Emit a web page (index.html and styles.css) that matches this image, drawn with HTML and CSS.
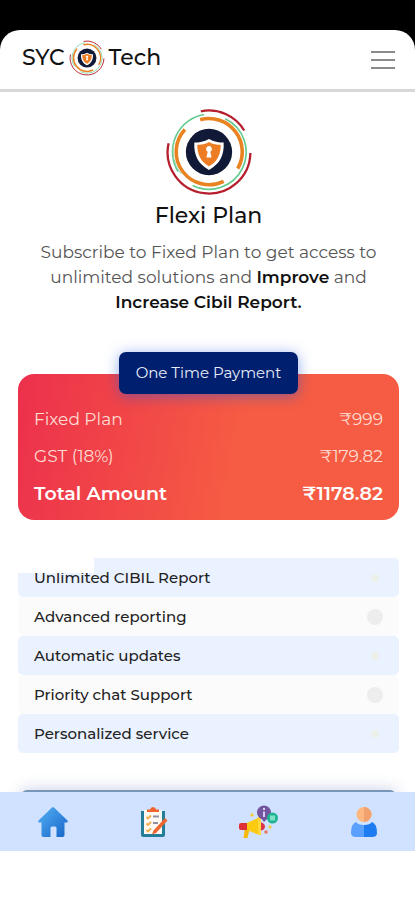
FILE: index.html
```html
<!DOCTYPE html>
<html lang="en">
<head>
    <meta charset="UTF-8">
    <meta name="viewport" content="width=device-width, initial-scale=1.0">
    <title>SYC Tech - Flexi Plan</title>
    <link rel="stylesheet" href="styles.css">
</head>
<body>
    <svg class="sprite" aria-hidden="true">
        <symbol id="logo" viewBox="-135 -135 270 270">
            <g fill="none">
                <path d="M-25-125A127 127 0 0 1 108-66" stroke="#b51f2d" stroke-width="7"/>
                <path d="M127 3A127 127 0 1 1-124-27" stroke="#b51f2d" stroke-width="7"/>
                <path d="M-15-115A116 116 0 0 0-95 60M50-102A114 114 0 0 1-50 103" stroke="#62c98f" stroke-width="5"/>
                <path d="M-106-35A110 110 0 0 0-85 68" stroke="#8fd6ac" stroke-width="3"/>
                <path d="M-27-99A102 102 0 0 1 88 51M-74-69A101 101 0 0 0 45 90" stroke="#e98220" stroke-width="11"/>
            </g>
            <circle r="71" fill="#101a36"/>
            <path d="M0-40C15-32 30-29 45-29C47 9 34 37 0 55C-34 37-47 9-45-29C-30-29-15-32 0-40Z" fill="#fff"/>
            <path d="M0-31C12-24 24-22 36-22C36 8 25 31 0 44C-25 31-36 8-36-22C-24-22-12-24 0-31Z" fill="#ed7d22"/>
            <path d="M-4-1A9 9 0 1 1 4-1L8 17H-8Z" fill="#fff"/>
        </symbol>
    </svg>

    <div class="app">
        <div class="status-bar"></div>
        <header class="header">
            <a href="#" class="brand">
                <span>SYC</span>
                <svg class="brand-logo"><use href="#logo"/></svg>
                <span>Tech</span>
            </a>
            <button class="menu-button" aria-label="Menu">
                <span></span>
                <span></span>
                <span></span>
            </button>
        </header>

        <main class="content">
            <section class="intro">
                <svg class="intro-logo"><use href="#logo"/></svg>
                <h1>Flexi Plan</h1>
                <p>Subscribe to Fixed Plan to get access to unlimited solutions and <strong>Improve</strong> and <strong>Increase Cibil Report.</strong></p>
            </section>

            <section class="price-card">
                <h2 class="price-badge">One Time Payment</h2>
                <dl class="price-list">
                    <div class="price-row">
                        <dt>Fixed Plan</dt>
                        <dd>₹999</dd>
                    </div>
                    <div class="price-row">
                        <dt>GST (18%)</dt>
                        <dd>₹179.82</dd>
                    </div>
                    <div class="price-row total">
                        <dt>Total Amount</dt>
                        <dd>₹1178.82</dd>
                    </div>
                </dl>
            </section>

            <ul class="features">
                <li>Unlimited CIBIL Report</li>
                <li>Advanced reporting</li>
                <li>Automatic updates</li>
                <li>Priority chat Support</li>
                <li>Personalized service</li>
            </ul>

            <button class="pay-button" aria-label="Pay"></button>
        </main>

        <nav class="bottom-nav">
            <a href="#" aria-label="Home">
                <svg viewBox="0 0 32 32">
                    <defs>
                        <linearGradient id="house" x1="0" y1="0" x2="1" y2="1">
                            <stop offset="0" stop-color="#55b1f5"/>
                            <stop offset="1" stop-color="#1664c8"/>
                        </linearGradient>
                    </defs>
                    <path d="M15 1.500Q16 .6 17 1.500L30.500 14.500Q31.500 16.500 29 16.500H27.500V29Q27.500 31 25.500 31H19.500V22Q19.500 20.500 18 20.500H15Q13.500 20.500 13.500 22V31H6.500Q4.500 31 4.500 29V16.500H3Q.5 16.500 1.500 14.500Z" fill="url(#house)"/>
                </svg>
            </a>
            <a href="#" aria-label="Reports">
                <svg viewBox="0 0 32 32">
                    <path d="M3 5H6V28H24V5H27V29Q27 31 25 31H5Q3 31 3 29Z" fill="#257e99"/>
                    <path d="M6 4H24V28H6Z" fill="#fff8f3"/>
                    <path d="M9 6V3.500H12Q12.500 1 15 1T18 3.500H21V6Z" fill="#f0642f"/>
                    <g fill="none" stroke="#f1ad4b" stroke-width="1.800">
                        <path d="M8.500 11L10 12.500L13 9.500M8.500 17.500L10 19L13 16M8.500 24L10 25.500L13 22.500"/>
                    </g>
                    <path d="M15 10.500H21M15 17H20" stroke="#8b91a0" stroke-width="2"/>
                    <path d="M14 28.500L15.500 24.500L27 12L29.500 14.500L18 27Z" fill="#ef6530"/>
                </svg>
            </a>
            <a href="#" aria-label="Offers">
                <svg class="wide" viewBox="0 0 40 34">
                    <path d="M6 22H11L8.500 33H4.500Z" fill="#f4b90c"/>
                    <path d="M2 18H9V25H2Q0 25 0 23V20Q0 18 2 18Z" fill="#dd2f35"/>
                    <path d="M8 18L20 12.500V30L8 25Z" fill="#fdca12"/>
                    <path d="M21 17Q26 18 26 21.500T21 26Z" fill="#dc344b"/>
                    <path d="M19 12H22V30H19Z" fill="#ffd83d"/>
                    <path d="M22 13L29 13L25 17Z" fill="#71559f"/>
                    <circle cx="25" cy="7.500" r="7" fill="#71559f"/>
                    <path d="M25 3V5M25 6.500V12" stroke="#d9cdf0" stroke-width="2"/>
                    <circle cx="33.500" cy="13" r="5.500" fill="#1fb391"/>
                    <rect x="31" y="10.500" width="5" height="5" fill="#80e0c7"/>
                    <path d="M11 10L13 8L15 10L13 12ZM29 22L31 20L33 22L31 24Z" fill="#f3cc35"/>
                    <circle cx="27" cy="27" r="1.800" fill="#ee775f"/>
                </svg>
            </a>
            <a href="#" aria-label="Profile">
                <svg viewBox="0 0 32 32">
                    <circle cx="16" cy="8.500" r="7.500" fill="#ffb780"/>
                    <path d="M16 1A7.500 7.500 0 0 1 16 16Z" fill="#f2a26e"/>
                    <path d="M8 16Q3 18 3 27Q3 31 8 31H16V19Q10 19 8 16Z" fill="#5aa1ff"/>
                    <path d="M24 16Q29 18 29 27Q29 31 24 31H16V19Q22 19 24 16Z" fill="#1d7cf2"/>
                </svg>
            </a>
        </nav>
        <div class="system-bar"></div>
    </div>
</body>
</html>
```
FILE: styles.css
```css
* {
    box-sizing: border-box;
}

body {
    margin: 0;
    font-family: Montserrat, Inter, sans-serif;
    color: #111;
    background-color: #fff;
}

h1,
h2,
p,
dl,
dd,
ul {
    margin: 0;
    padding: 0;
}

button {
    border: none;
    padding: 0;
    cursor: pointer;
}

.sprite {
    position: absolute;
    width: 0;
    height: 0;
}

.app {
    display: flex;
    flex-direction: column;
    height: 100vh;
    background: linear-gradient(#000 52px, #fff 52px);
}

.status-bar {
    flex: none;
    height: 30px;
}

.header {
    flex: none;
    display: flex;
    justify-content: space-between;
    align-items: center;
    height: 62px;
    padding: 0 20px 4px 22px;
    background-color: #fff;
    border-bottom: 3px solid #d8d8d8;
    border-radius: 20px 20px 0 0;
}

.brand {
    display: flex;
    align-items: center;
    gap: 4px;
    color: #111;
    font-size: 22px;
    font-weight: 500;
    text-decoration: none;
}

.brand-logo {
    width: 36px;
    height: 36px;
}

.menu-button {
    display: flex;
    flex-direction: column;
    gap: 6px;
    padding-top: 4px;
    background: none;
}

.menu-button span {
    width: 24px;
    height: 2px;
    background-color: #8c8c8c;
}

.content {
    flex: 1;
    min-height: 0;
    padding: 0 16px 0 18px;
    overflow: hidden;
    background-color: #fff;
}

.intro {
    padding: 16px 16px 0;
    text-align: center;
}

.intro-logo {
    display: block;
    width: 88px;
    height: 88px;
    margin: 0 auto 4px;
}

.intro h1 {
    margin-bottom: 8px;
    font-size: 22px;
    font-weight: 500;
    line-height: 32px;
}

.intro p {
    color: #555;
    font-size: 17px;
    line-height: 25px;
}

.intro strong {
    color: #111;
    font-weight: 600;
}

.price-card {
    display: flex;
    flex-direction: column;
    align-items: center;
    margin-top: 59px;
    padding: 0 16px 8px;
    color: #fff;
    background: linear-gradient(100deg, #ec304c, #f65c43 58%);
    border-radius: 16px;
}

.price-badge {
    margin-top: -22px;
    padding: 0 17px;
    background-color: #00206f;
    border-radius: 7px;
    box-shadow: 0 2px 14px rgba(30, 85, 220, 0.5);
    color: #e8edfa;
    font-size: 15px;
    font-weight: 400;
    line-height: 42px;
}

.price-list {
    width: 100%;
    padding-top: 7px;
}

.price-row {
    display: flex;
    justify-content: space-between;
    color: #ffdcd2;
    font-size: 17px;
    line-height: 37px;
}

.price-row.total {
    color: #fff;
    font-size: 19px;
    font-weight: 600;
}

.features {
    position: relative;
    margin-top: 38px;
    list-style: none;
}

/* blank patch over the corner of the first row */
.features::before {
    content: "";
    position: absolute;
    top: 0;
    left: 0;
    width: 76px;
    height: 15px;
    background-color: #fff;
}

.features li {
    display: flex;
    justify-content: space-between;
    align-items: center;
    padding: 0 16px;
    background-color: #eaf1ff;
    border-radius: 5px;
    color: #222;
    font-size: 15px;
    font-weight: 500;
    line-height: 39px;
}

.features li::after {
    content: "";
    width: 8px;
    height: 8px;
    margin-right: 4px;
    background-color: #ecf0e9;
    border-radius: 50%;
}

.features li:nth-child(even) {
    background-color: #fbfbfb;
}

.features li:nth-child(even)::after {
    width: 16px;
    height: 16px;
    margin-right: 0;
    background-color: #ededed;
}

.pay-button {
    display: block;
    width: calc(100% - 6px);
    height: 44px;
    margin: 37px auto 0;
    background-color: #7896b8;
    border-radius: 6px;
    box-shadow: 0 0 16px rgba(70, 90, 170, 0.3);
}

.bottom-nav {
    flex: none;
    z-index: 1;
    display: flex;
    justify-content: space-around;
    align-items: center;
    height: 59px;
    padding-left: 2px;
    background-color: #d0e2ff;
}

.bottom-nav a {
    display: flex;
}

.bottom-nav svg {
    width: 32px;
    height: 32px;
}

.bottom-nav svg.wide {
    width: 40px;
    height: 34px;
}

.system-bar {
    flex: none;
    height: 49px;
    background-color: #fff;
}
```
